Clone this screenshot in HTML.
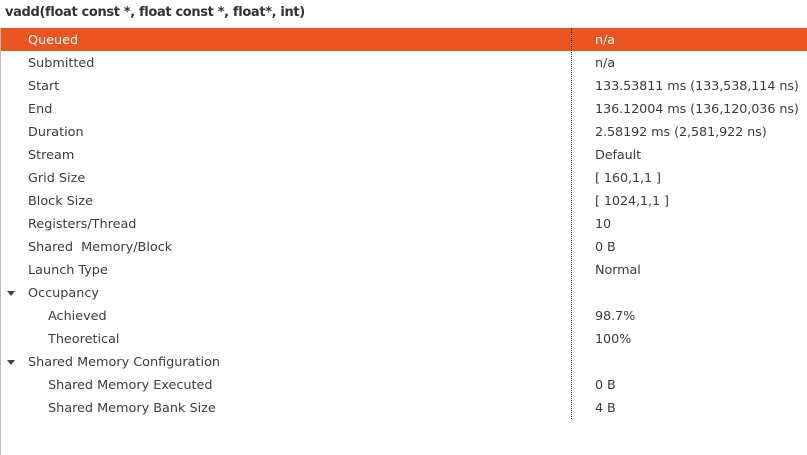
<!DOCTYPE html>
<html><head><style>
body{margin:0;width:807px;height:455px;background:#fff;font-family:"DejaVu Sans","Liberation Sans",sans-serif;font-size:12.8px;color:#3c3c3c;position:relative;overflow:hidden}
.t{position:absolute;left:5px;top:5px;font-weight:bold;font-size:13px;color:#333;letter-spacing:-0.35px}
.lb{position:absolute;left:0;top:28px;width:1px;height:427px;background:#bbb}
.dl{position:absolute;left:571px;top:28px;height:391px;border-left:1px dotted #222}
.r{position:absolute;left:1px;width:806px;height:23px;line-height:25px}
.r span{position:absolute;left:594px;letter-spacing:-0.1px}
.r b{font-weight:normal;position:absolute}
.sel{background:#e95420;color:#fff}
.tri{position:absolute;left:6px;top:10px;width:0;height:0;border-left:4px solid transparent;border-right:4px solid transparent;border-top:5px solid #444}
</style></head><body>
<div class="t">vadd(float const *, float const *, float*, int)</div>
<div class="lb"></div>
<div class="r sel" style="top:28px"><b style="left:27px">Queued</b><span>n/a</span></div>
<div class="dl"></div>
<div class="r" style="top:51px"><b style="left:27px">Submitted</b><span>n/a</span></div>
<div class="r" style="top:74px"><b style="left:27px">Start</b><span>133.53811 ms (133,538,114 ns)</span></div>
<div class="r" style="top:97px"><b style="left:27px">End</b><span>136.12004 ms (136,120,036 ns)</span></div>
<div class="r" style="top:120px"><b style="left:27px">Duration</b><span>2.58192 ms (2,581,922 ns)</span></div>
<div class="r" style="top:143px"><b style="left:27px">Stream</b><span>Default</span></div>
<div class="r" style="top:166px"><b style="left:27px">Grid Size</b><span>[ 160,1,1 ]</span></div>
<div class="r" style="top:189px"><b style="left:27px">Block Size</b><span>[ 1024,1,1 ]</span></div>
<div class="r" style="top:212px"><b style="left:27px">Registers/Thread</b><span>10</span></div>
<div class="r" style="top:235px"><b style="left:27px">Shared&nbsp; Memory/Block</b><span>0 B</span></div>
<div class="r" style="top:258px"><b style="left:27px">Launch Type</b><span>Normal</span></div>
<div class="r" style="top:281px"><div class="tri"></div><b style="left:27px">Occupancy</b></div>
<div class="r" style="top:304px"><b style="left:47px">Achieved</b><span>98.7%</span></div>
<div class="r" style="top:327px"><b style="left:47px">Theoretical</b><span>100%</span></div>
<div class="r" style="top:350px"><div class="tri"></div><b style="left:27px">Shared Memory Configuration</b></div>
<div class="r" style="top:373px"><b style="left:47px">Shared Memory Executed</b><span>0 B</span></div>
<div class="r" style="top:396px"><b style="left:47px">Shared Memory Bank Size</b><span>4 B</span></div>
</body></html>
